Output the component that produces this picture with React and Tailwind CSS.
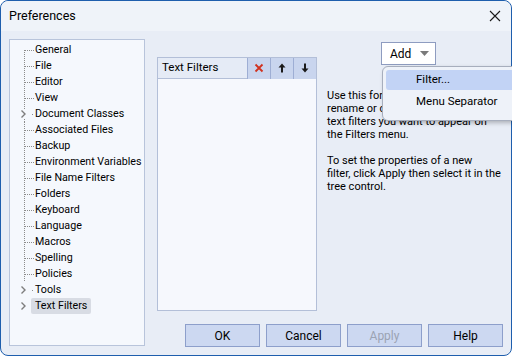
import React from "react";

const treeItems = [
  { label: "General", first: true },
  { label: "File" },
  { label: "Editor" },
  { label: "View" },
  { label: "Document Classes", expand: true },
  { label: "Associated Files" },
  { label: "Backup" },
  { label: "Environment Variables" },
  { label: "File Name Filters" },
  { label: "Folders" },
  { label: "Keyboard" },
  { label: "Language" },
  { label: "Macros" },
  { label: "Spelling" },
  { label: "Policies" },
  { label: "Tools", expand: true, tail: true },
  { label: "Text Filters", expand: true, tail: true, selected: true },
];

function Connector({ item }) {
  return (
    <svg width="16" height="16" viewBox="0 0 16 16" className="shrink-0">
      {!item.expand && (
        <line
          x1="5.5"
          y1={item.first ? 8 : 0}
          x2="5.5"
          y2="16"
          stroke="#8c8c8c"
          strokeDasharray="1 1"
        />
      )}
      {item.expand && !item.tail && (
        <>
          <line x1="5.5" y1="0" x2="5.5" y2="3" stroke="#8c8c8c" strokeDasharray="1 1" />
          <line x1="5.5" y1="13" x2="5.5" y2="16" stroke="#8c8c8c" strokeDasharray="1 1" />
        </>
      )}
      {item.expand ? (
        <>
          <path d="M2.5 4.5 L6 8 L2.5 11.5" fill="none" stroke="#7d7d7d" strokeWidth="1.4" />
          <rect x="13" y="8" width="1" height="1" fill="#8c8c8c" />
        </>
      ) : (
        <line x1="6" y1="8.5" x2="15" y2="8.5" stroke="#8c8c8c" strokeDasharray="1 1" />
      )}
    </svg>
  );
}

function TreeRow({ item }) {
  return (
    <div className="flex h-[16px] items-center whitespace-nowrap pl-[9px] text-[10.7px]">
      <Connector item={item} />
      <span
        className={
          item.selected
            ? "relative -ml-[4px] rounded-[2px] bg-[#d8dce4] px-[4px] leading-[16px]"
            : "leading-[16px]"
        }
      >
        {item.label}
      </span>
    </div>
  );
}

function ToolButton({ children }) {
  return (
    <div className="flex h-[21px] w-[23px] items-center justify-center border-l border-[#9eaed4] bg-[#c9d5ee]">
      {children}
    </div>
  );
}

function DialogButton({ children, disabled }) {
  return (
    <button
      className={
        "h-[23px] w-[75px] border border-[#8d9fcb] bg-[#ccd8f1] text-[12px] " +
        (disabled ? "text-[#9ba3b3]" : "text-black")
      }
    >
      {children}
    </button>
  );
}

export default function App() {
  return (
    <div className="relative h-[356px] w-[512px] overflow-hidden bg-white font-['Roboto',sans-serif] text-[11px] text-black">
      <div className="flex h-[356px] w-[512px] flex-col rounded-[8px] border border-[#1e5ead] bg-[#e8edf6]">
        {/* title bar */}
        <div className="flex h-[30px] items-center justify-between rounded-t-[8px] bg-[#eff3f9] pl-[8px] pr-[10px]">
          <span className="text-[12.5px]">Preferences</span>
          <svg width="12" height="12" viewBox="0 0 12 12">
            <path d="M1 1 L11 11 M11 1 L1 11" stroke="#1a1a1a" strokeWidth="1.1" />
          </svg>
        </div>

        <div className="flex flex-1 items-start pl-[8px] pt-[8px]">
          {/* tree */}
          <div className="h-[307px] w-[136px] overflow-hidden border border-[#b8c4db] bg-[#f5f8fd] pt-[2px]">
            {treeItems.map((item) => (
              <TreeRow key={item.label} item={item} />
            ))}
          </div>

          {/* right side */}
          <div className="ml-[12px] flex h-[308px] flex-1 flex-col pr-[8px]">
            <div className="flex flex-1">
              <div className="mt-[18px] flex h-[254px] w-[160px] flex-col border border-[#b3bfd8] bg-[#f6f8fd]">
                <div className="flex h-[21px] items-center border-b border-[#b3bfd8] bg-[#e5ebf6]">
                  <span className="flex-1 pl-[4px] text-[11.5px]">Text Filters</span>
                  <ToolButton>
                    <svg width="10" height="10" viewBox="0 0 10 10">
                      <path d="M1.5 1.5 L8.5 8.5 M8.5 1.5 L1.5 8.5" stroke="#d0321f" strokeWidth="1.8" />
                    </svg>
                  </ToolButton>
                  <ToolButton>
                    <svg width="8" height="10" viewBox="0 0 8 10">
                      <path d="M4 0.5 L7.5 4.5 L5 4.5 L5 9.5 L3 9.5 L3 4.5 L0.5 4.5 Z" fill="#1a1a1a" />
                    </svg>
                  </ToolButton>
                  <ToolButton>
                    <svg width="8" height="10" viewBox="0 0 8 10">
                      <path d="M4 9.5 L7.5 5.5 L5 5.5 L5 0.5 L3 0.5 L3 5.5 L0.5 5.5 Z" fill="#1a1a1a" />
                    </svg>
                  </ToolButton>
                </div>
                <div className="flex-1" />
              </div>

              <div className="ml-[10px] flex flex-1 flex-col">
                <div className="ml-[54px] mt-[3px] flex h-[23px] w-[55px] items-center border border-[#8e9cc0] bg-white pl-[8px]">
                  <span className="flex-1 text-[12px]">Add</span>
                  <svg width="9" height="5" viewBox="0 0 9 5" className="mr-[6px]">
                    <path d="M0 0 L9 0 L4.5 5 Z" fill="#7a7a7a" />
                  </svg>
                </div>
                <p className="mt-[24px] leading-[13px]">
                  Use this form to add, delete,
                  <br />
                  rename or change the order of the
                  <br />
                  text filters you want to appear on
                  <br />
                  the Filters menu.
                </p>
                <p className="mt-[13px] leading-[13px]">
                  To set the properties of a new
                  <br />
                  filter, click Apply then select it in the
                  <br />
                  tree control.
                </p>
              </div>
            </div>

            <div className="flex justify-end gap-[6px]">
              <DialogButton>OK</DialogButton>
              <DialogButton>Cancel</DialogButton>
              <DialogButton disabled>Apply</DialogButton>
              <DialogButton>Help</DialogButton>
            </div>
          </div>
        </div>
      </div>

      {/* dropdown menu over the dialog */}
      <div className="absolute left-[382px] top-[66px] h-[55px] w-[140px] rounded-l-[6px] border border-[#a7aebd] bg-[#eef2f9] px-[3px] pt-[3px] shadow-[2px_2px_4px_rgba(0,0,0,0.25)]">
        <div className="flex h-[20px] items-center rounded-[3px] bg-[#c2d3f5] pl-[30px] text-[11.5px]">
          Filter...
        </div>
        <div className="mt-[2px] flex h-[20px] items-center pl-[30px] text-[11.5px]">
          Menu Separator
        </div>
      </div>
    </div>
  );
}
